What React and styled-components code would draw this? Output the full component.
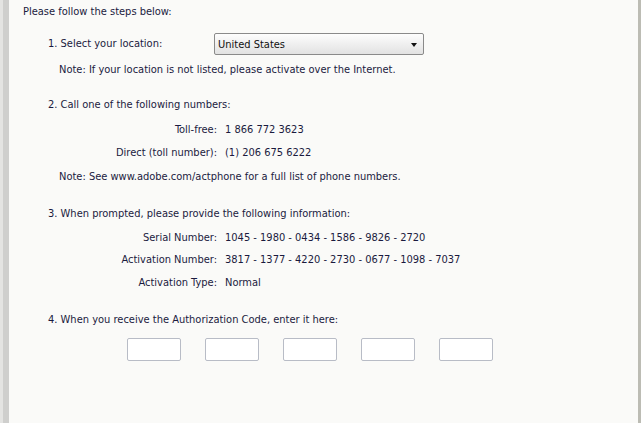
import styled, { createGlobalStyle } from "styled-components";

const GlobalStyle = createGlobalStyle`
  html, body {
    margin: 0;
    padding: 0;
    background: #fafaf8;
  }
  body {
    font-family: "DejaVu Sans Condensed", Tahoma, "Liberation Sans", sans-serif;
    font-size: 11px;
    color: #1a1a3e;
  }
`;

const Frame = styled.div`
  display: flex;
  width: 641px;
  height: 423px;
  overflow: hidden;
`;

const Rail = styled.div`
  width: 3px;
  background: #e4e4e2;
  border-right: 6px solid #cfcfcd;
  flex: none;
`;

const Content = styled.div`
  flex: 1;
  padding-left: 14px;
  display: flex;
  flex-direction: column;
`;

const EdgeBar = styled.div`
  width: 3px;
  background: #bcbcb4;
  flex: none;
`;

const Line = styled.div`
  line-height: 16px;
  margin-top: ${(p) => p.$mt || 0}px;
  padding-left: ${(p) => p.$indent || 0}px;
  white-space: nowrap;
`;

const Row = styled.div`
  display: flex;
  align-items: center;
  margin-top: ${(p) => p.$mt || 0}px;
  padding-left: 25px;
`;

const RowLabel = styled.span`
  width: 166px;
  line-height: 16px;
`;

const Select = styled.div`
  width: 210px;
  height: 22px;
  box-sizing: border-box;
  border: 1px solid #8a8a8a;
  border-radius: 2px;
  background: linear-gradient(#fdfdfd, #e2e2e2);
  display: flex;
  align-items: center;
  justify-content: space-between;
  padding: 0 6px 0 3px;
  color: #111;
`;

const Arrow = styled.span`
  width: 0;
  height: 0;
  margin-top: 1px;
  border-left: 3.5px solid transparent;
  border-right: 3.5px solid transparent;
  border-top: 4px solid #111;
`;

const Field = styled.div`
  display: flex;
  margin-top: ${(p) => p.$mt || 0}px;
  line-height: 16px;
`;

const FieldLabel = styled.span`
  width: 194px;
  text-align: right;
  flex: none;
`;

const FieldValue = styled.span`
  padding-left: 8px;
  white-space: nowrap;
`;

const Boxes = styled.div`
  display: flex;
  gap: 24px;
  margin-top: 10px;
  padding-left: 104px;
`;

const CodeBox = styled.input`
  width: 54px;
  height: 23px;
  box-sizing: border-box;
  border: 1px solid #b8bcc6;
  border-radius: 2px;
  background: #fff;
  margin: 0;
  padding: 0 3px;
  font: inherit;
`;

export default function App() {
  return (
    <>
      <GlobalStyle />
      <Frame>
        <Rail />
        <Content>
          <Line $mt={4}>Please follow the steps below:</Line>

          <Row $mt={13}>
            <RowLabel>1. Select your location:</RowLabel>
            <Select>
              <span>United States</span>
              <Arrow />
            </Select>
          </Row>
          <Line $mt={7} $indent={36}>
            Note: If your location is not listed, please activate over the Internet.
          </Line>

          <Line $mt={19} $indent={25}>2. Call one of the following numbers:</Line>
          <Field $mt={9}>
            <FieldLabel>Toll-free:</FieldLabel>
            <FieldValue>1 866 772 3623</FieldValue>
          </Field>
          <Field $mt={7}>
            <FieldLabel>Direct (toll number):</FieldLabel>
            <FieldValue>(1) 206 675 6222</FieldValue>
          </Field>
          <Line $mt={8} $indent={36}>
            Note: See www.adobe.com/actphone for a full list of phone numbers.
          </Line>

          <Line $mt={21} $indent={25}>
            3. When prompted, please provide the following information:
          </Line>
          <Field $mt={8}>
            <FieldLabel>Serial Number:</FieldLabel>
            <FieldValue>1045 - 1980 - 0434 - 1586 - 9826 - 2720</FieldValue>
          </Field>
          <Field $mt={6}>
            <FieldLabel>Activation Number:</FieldLabel>
            <FieldValue>3817 - 1377 - 4220 - 2730 - 0677 - 1098 - 7037</FieldValue>
          </Field>
          <Field $mt={7}>
            <FieldLabel>Activation Type:</FieldLabel>
            <FieldValue>Normal</FieldValue>
          </Field>

          <Line $mt={21} $indent={25}>
            4. When you receive the Authorization Code, enter it here:
          </Line>
          <Boxes>
            {[0, 1, 2, 3, 4].map((i) => (
              <CodeBox key={i} aria-label={`Authorization code part ${i + 1}`} />
            ))}
          </Boxes>
        </Content>
        <EdgeBar />
      </Frame>
    </>
  );
}
